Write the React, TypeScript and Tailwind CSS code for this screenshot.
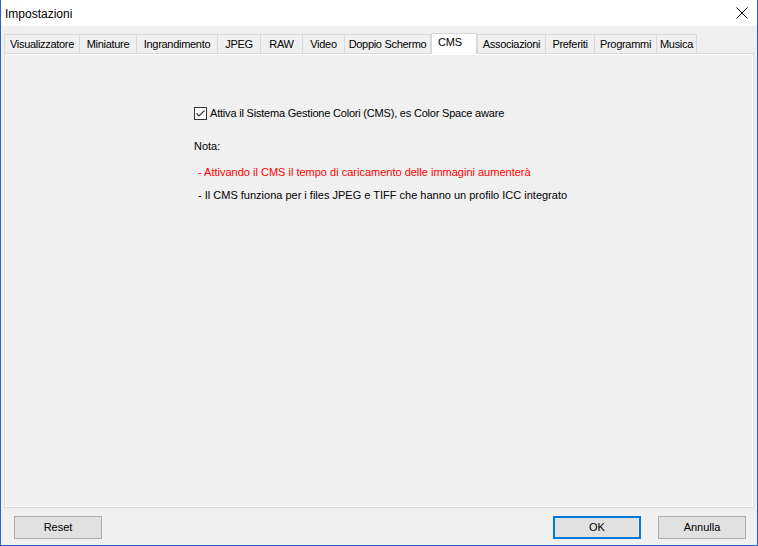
import React from "react";

const tabs: { label: string; w: number }[] = [
  { label: "Visualizzatore", w: 75 },
  { label: "Miniature", w: 57 },
  { label: "Ingrandimento", w: 81 },
  { label: "JPEG", w: 43 },
  { label: "RAW", w: 42 },
  { label: "Video", w: 42 },
  { label: "Doppio Schermo", w: 87 },
  { label: "CMS", w: 46 },
  { label: "Associazioni", w: 68 },
  { label: "Preferiti", w: 49 },
  { label: "Programmi", w: 62 },
  { label: "Musica", w: 41 },
];

export default function App() {
  const font = { fontFamily: '"Liberation Sans", Arial, sans-serif' };
  return (
    <div
      className="w-[758px] h-[546px] bg-[#f0f0f0] border-x border-b border-[#2a5fcf] flex flex-col text-[11px] text-black overflow-hidden"
      style={font}
    >
      {/* Title bar */}
      <div className="h-[26px] bg-white flex items-center justify-between shrink-0">
        <span className="pl-[4px] text-[12px] leading-none pt-[1px]">Impostazioni</span>
        <svg width="30" height="26" viewBox="0 0 30 26">
          <path d="M9.5 7.5 L20.5 18.5 M20.5 7.5 L9.5 18.5" stroke="#000" strokeWidth="1" />
        </svg>
      </div>

      {/* Tabs */}
      <div className="flex items-end pl-[3px] h-[27px] shrink-0 relative z-10">
        {tabs.map((t, i) => {
          const sel = t.label === "CMS";
          return (
            <div
              key={t.label}
              style={{ width: t.w }}
              className={
                sel
                  ? "h-[21px] -mb-[1px] bg-white border-t border-l border-r border-[#d9d9d9] pl-[6px] pt-[3px] leading-none whitespace-nowrap tracking-[-0.2px]"
                  : "h-[19px] bg-[#f0f0f0] border-t border-l border-[#d9d9d9] flex items-center justify-center leading-none whitespace-nowrap tracking-[-0.3px]" +
                    (i === tabs.length - 1 || tabs[i + 1].label === "CMS" ? " border-r" : "")
              }
            >
              {t.label}
            </div>
          );
        })}
      </div>

      {/* Panel */}
      <div className="mx-[3px] h-[455px] border border-[#d9d9d9] bg-[#f0f0f0] shadow-[inset_1px_1px_0_#fff,inset_-1px_-1px_0_#fff] pl-[189px] pt-[53px] shrink-0">
        <div className="flex items-center gap-[3px] h-[13px]">
          <div className="w-[13px] h-[13px] border border-[#333] bg-white flex items-center justify-center">
            <svg width="11" height="11" viewBox="0 0 11 11">
              <path d="M1.5 5.5 L4 8 L9.5 2.5" stroke="#333" strokeWidth="1.1" fill="none" />
            </svg>
          </div>
          <span className="leading-none tracking-[-0.2px]">Attiva il Sistema Gestione Colori (CMS), es Color Space aware</span>
        </div>
        <div className="mt-[21px] leading-none">Nota:</div>
        <div className="mt-[15px] ml-[4px] leading-none text-[#ff0000]">
          - Attivando il CMS il tempo di caricamento delle immagini aumenterà
        </div>
        <div className="mt-[12px] ml-[4px] leading-none">
          - Il CMS funziona per i files JPEG e TIFF che hanno un profilo ICC integrato
        </div>
      </div>

      {/* Buttons */}
      <div className="flex items-start pt-[8px] pl-[13px] pr-[11px] flex-1">
        <button className="w-[88px] h-[23px] bg-[#e1e1e1] border border-[#adadad] text-[11px]">Reset</button>
        <div className="flex-1" />
        <button className="w-[88px] h-[23px] bg-[#e1e1e1] border-2 border-[#0078d7] text-[11px]">OK</button>
        <button className="w-[88px] h-[23px] ml-[17px] bg-[#e1e1e1] border border-[#adadad] text-[11px]">Annulla</button>
      </div>
    </div>
  );
}
